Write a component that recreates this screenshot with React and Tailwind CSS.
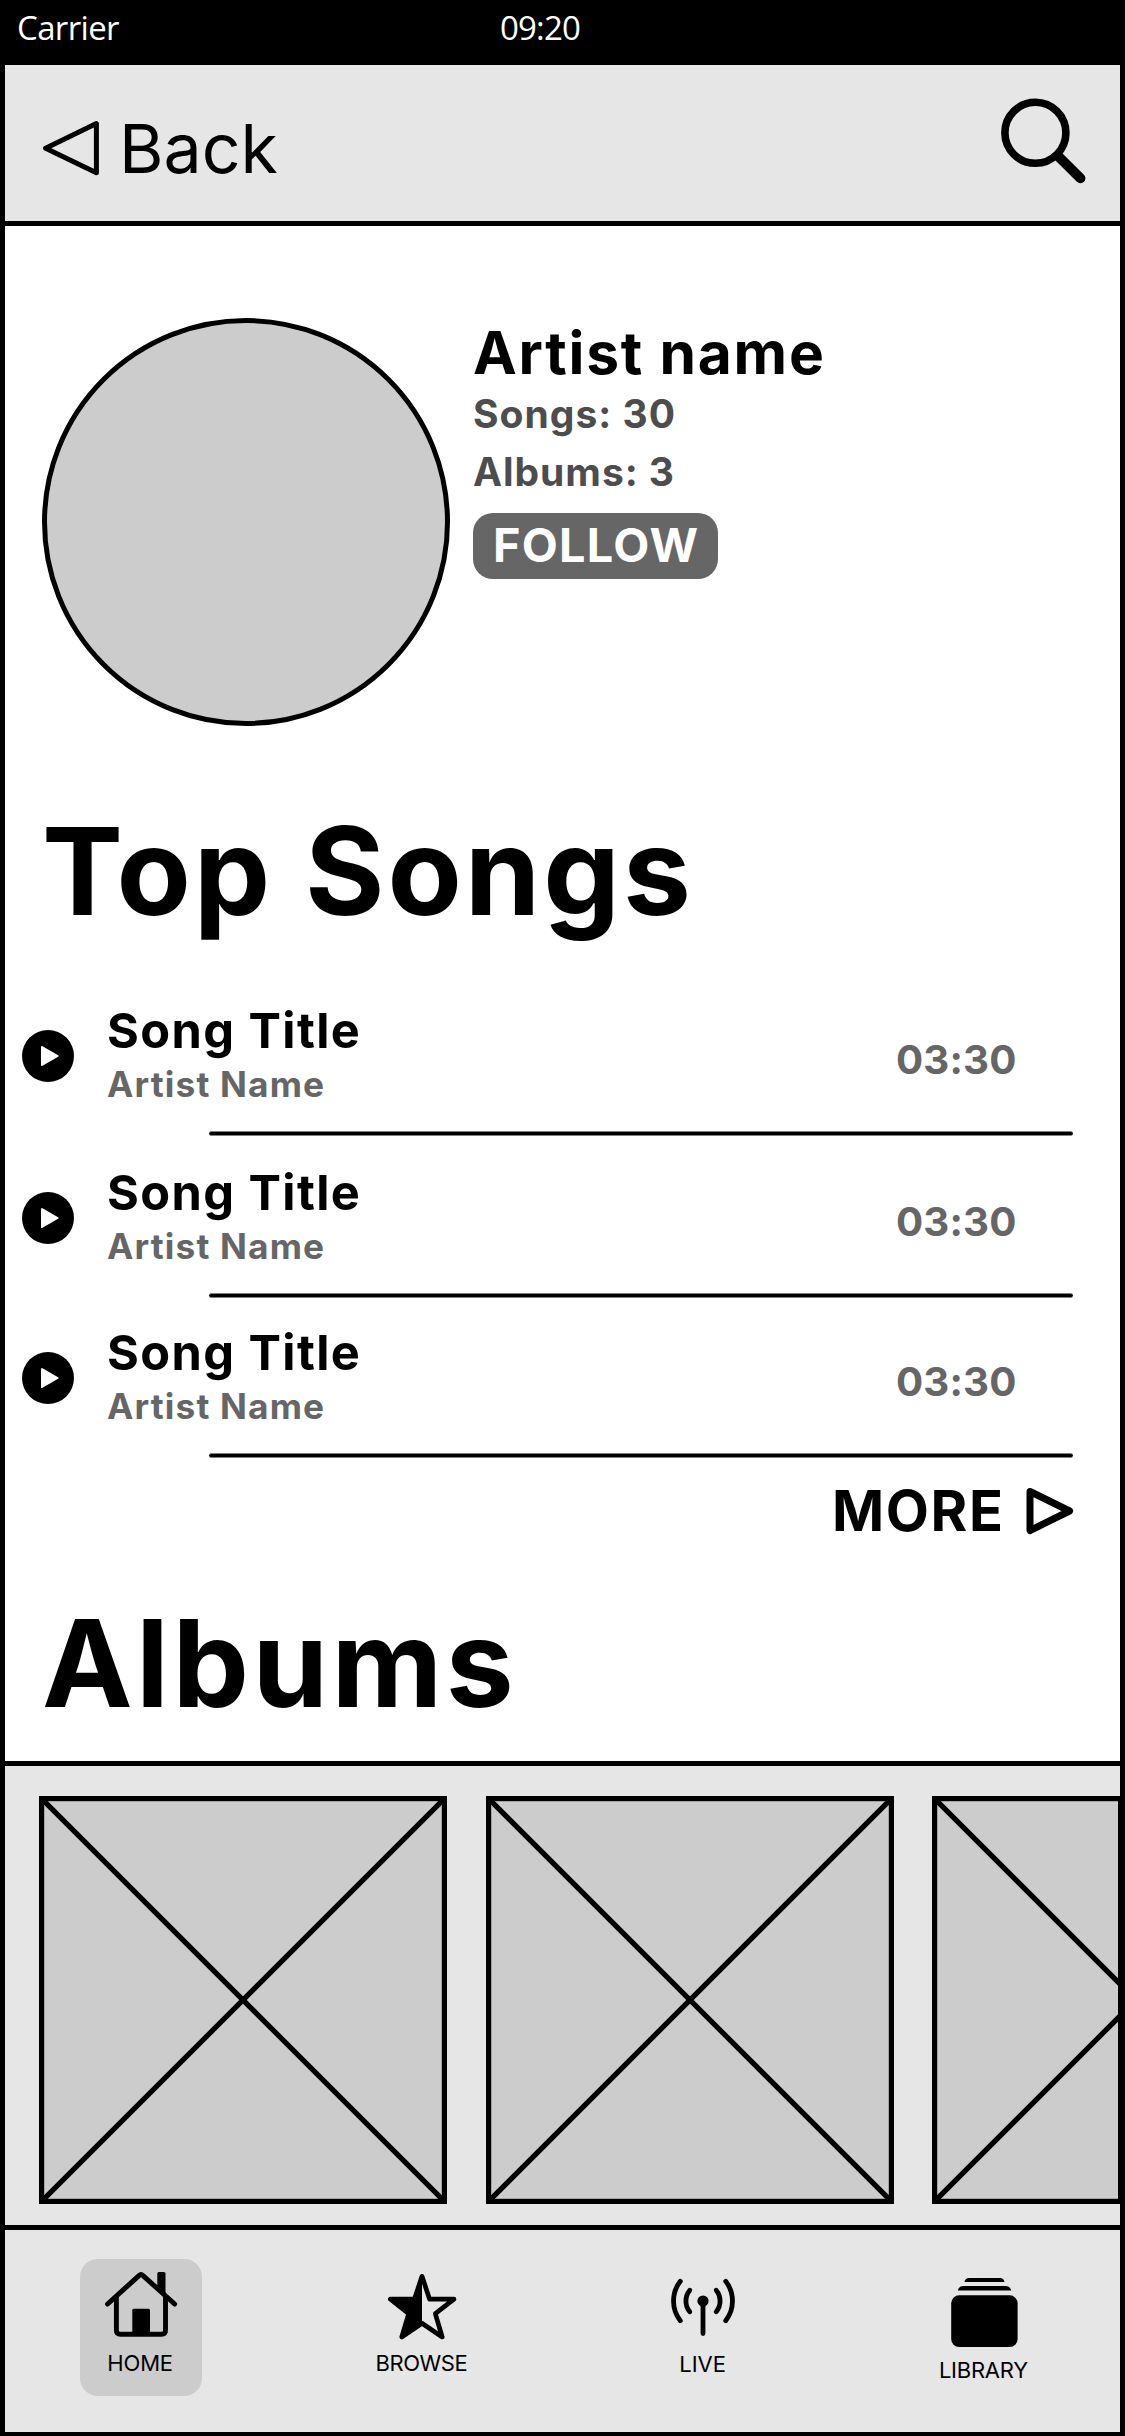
/* eslint-disable react/prop-types */
import clsx from "clsx";

const songs = [
  { id: 1, title: "Song Title", artist: "Artist Name", length: "03:30" },
  { id: 2, title: "Song Title", artist: "Artist Name", length: "03:30" },
  { id: 3, title: "Song Title", artist: "Artist Name", length: "03:30" },
];

/* Icons */
function BackIcon() {
  return (
    <svg width="58" height="56" viewBox="0 0 58 56" fill="none">
      <path
        d="M3.6 28.2 L54.4 3.6 V52.8 Z"
        stroke="#000"
        strokeWidth="5"
        strokeLinejoin="round"
      />
    </svg>
  );
}

function SearchIcon() {
  return (
    <svg width="87" height="87" viewBox="0 0 87 87" fill="none" stroke="#000">
      <circle cx="35.4" cy="34.8" r="30.5" strokeWidth="7.6" />
      <path d="M58.5 58.5 L80.4 80.2" strokeWidth="10" strokeLinecap="round" />
    </svg>
  );
}

function PlayIcon() {
  return (
    <svg width="52" height="52" viewBox="0 0 52 52">
      <circle cx="26" cy="26" r="26" />
      <path
        d="M20 17 L35.6 26 L20 35 Z"
        fill="#fff"
        stroke="#fff"
        strokeWidth="2"
        strokeLinejoin="round"
      />
    </svg>
  );
}

function MoreIcon() {
  return (
    <svg width="50" height="48" viewBox="0 0 50 48" fill="none">
      <path
        d="M6 4.5 L45.6 24 L6 43.5 Z"
        stroke="#000"
        strokeWidth="7"
        strokeLinejoin="round"
      />
    </svg>
  );
}

function HomeIcon() {
  return (
    <svg width="80" height="80" viewBox="0 0 80 80" fill="none" stroke="#000">
      <path
        d="M6.6 36 L38 7.6 Q40 5.8 42 7.6 L73.6 36"
        strokeWidth="5"
        strokeLinecap="round"
      />
      <path
        d="M15.4 29 V62.2 Q15.4 66.2 19.4 66.2 H60.5 Q64.5 66.2 64.5 62.2 V29"
        strokeWidth="4.9"
      />
      <path
        d="M56.3 22.5 V5.6 Q56.3 4.1 57.8 4.1 H63 Q64.5 4.1 64.5 5.6 V29 Z"
        fill="#000"
        stroke="none"
      />
      <rect x="31.3" y="40.7" width="17.7" height="26" rx="1.5" fill="#000" stroke="none" />
    </svg>
  );
}

function StarIcon() {
  return (
    <svg width="80" height="80" viewBox="0 0 80 80" fill="none">
      <path
        d="M40 8.3 L47.6 31.2 H72 L53.3 45.6 L60.2 69 L40 55.2 L19.8 69 L26.7 45.6 L8.3 31.2 H32.4 Z"
        stroke="#000"
        strokeWidth="4.7"
        strokeLinejoin="round"
      />
      <path d="M40 8.3 V55.2 L19.8 69 L26.7 45.6 L8.3 31.2 H32.4 Z" fill="#000" />
    </svg>
  );
}

function LiveIcon() {
  return (
    <svg
      width="80"
      height="80"
      viewBox="0 0 80 80"
      fill="none"
      stroke="#000"
      strokeWidth="4.8"
      strokeLinecap="round"
    >
      <path d="M17.3 13.3 A32 32 0 0 0 17.3 52.7" />
      <path d="M62.7 13.3 A32 32 0 0 1 62.7 52.7" />
      <path d="M26.8 22.2 A17 17 0 0 0 26.8 43.8" />
      <path d="M53.2 22.2 A17 17 0 0 1 53.2 43.8" />
      <path d="M40 33 V65.5" />
      <circle cx="40" cy="33" r="5.6" fill="#000" stroke="none" />
    </svg>
  );
}

function LibraryIcon() {
  return (
    <svg width="80" height="80" viewBox="0 0 80 80">
      <path d="M20.4 14 Q21.4 10 25 10 H56 Q59.6 10 60.6 14 Z" />
      <path d="M13.8 22.6 Q15 18 19 18 H62 Q66 18 67.2 22.6 Z" />
      <rect x="7.2" y="27.3" width="66.4" height="51.7" rx="8" />
    </svg>
  );
}

const tabs = [
  { name: "HOME", icon: HomeIcon, active: true, label: "mr-px tracking-[-0.18px]" },
  { name: "BROWSE", icon: StarIcon, label: "mr-px tracking-[-0.43px]" },
  { name: "LIVE", icon: LiveIcon, label: "mt-px mr-px" },
  { name: "LIBRARY", icon: LibraryIcon, label: "mt-[7px] mr-0.5 tracking-[-0.24px]" },
];

function SongRow({ song, className }) {
  return (
    <div className={clsx("pt-[26px]", className)}>
      <div className="flex items-start h-[108px] pl-[17px]">
        <button className="mt-[30px] shrink-0">
          <PlayIcon />
        </button>
        <div className="ml-[33px] mt-px w-[789px]">
          <p className="text-[48.7px] leading-[60px] font-bold tracking-[1.41px]">
            {song.title}
          </p>
          <p className="text-[35.3px] leading-[48px] font-bold tracking-[1.15px] text-[#666666]">
            {song.artist}
          </p>
        </div>
        <span className="mt-9 text-[40.3px] leading-[48px] font-bold tracking-[0.14px] text-[#666666]">
          {song.length}
        </span>
      </div>
      <div className="mt-[23px] ml-[204px] mr-[47px] h-[5px] rounded-sm bg-black border-y border-[#808080]" />
    </div>
  );
}

function AlbumCover() {
  return (
    <svg
      className="block shrink-0"
      width="408"
      height="408"
      viewBox="0 0 408 408"
      stroke="#000"
      strokeWidth="5.2"
    >
      <rect x="2.6" y="2.6" width="402.8" height="402.8" fill="#cccccc" />
      <path d="M2.6 2.6 L405.4 405.4 M405.4 2.6 L2.6 405.4" />
    </svg>
  );
}

function App() {
  return (
    <div className="w-[1125px] h-[2436px] flex flex-col overflow-hidden bg-white text-black border-x-[5px] border-b-4 border-black font-['Inter',sans-serif]">
      {/* Status bar */}
      <div className="flex h-[65px] shrink-0 bg-black pl-3 text-white text-[33px] leading-[55px] font-['Open_Sans',sans-serif]">
        <span className="w-[483px] tracking-[-0.66px]">Carrier</span>
        <span className="tracking-[-0.82px]">09:20</span>
      </div>

      {/* Header */}
      <header className="flex items-start justify-between h-[161px] shrink-0 bg-[#e6e6e6] border-b-[5px] border-black pl-[37px] pr-[33px]">
        <button className="mt-[51px] flex items-center">
          <BackIcon />
          <span className="ml-[19px] text-[68px] leading-[64px]">Back</span>
        </button>
        <button className="mt-[33px]">
          <SearchIcon />
        </button>
      </header>

      <main className="flex-1">
        {/* Artist */}
        <section className="flex pt-[92px] pl-[37px]">
          <div className="size-[408px] rounded-full bg-[#cccccc] border-[5px] border-black" />
          <div className="ml-[23px] pt-[3px] font-bold">
            <h1 className="text-[58.7px] leading-[64px] tracking-[1.72px]">Artist name</h1>
            <p className="text-[39px] leading-[58px] tracking-[1.02px] text-[#4d4d4d]">
              Songs: 30
            </p>
            <p className="text-[39px] leading-[58px] tracking-[0.95px] text-[#4d4d4d]">
              Albums: 3
            </p>
            <button className="mt-3 flex w-[245px] h-[66px] pl-5 rounded-[20px] bg-[#666666] text-white text-[46.8px] leading-[64px] tracking-[1.27px]">
              FOLLOW
            </button>
          </div>
        </section>

        {/* Top songs */}
        <section>
          <h2 className="mt-[85px] pl-[37px] text-[121.4px] leading-[120px] font-bold tracking-[2.93px]">
            Top Songs
          </h2>
          <div className="mt-[43px]">
            {songs.map((song, i) => (
              <SongRow key={song.id} song={song} className={i === 2 && "-mt-0.5"} />
            ))}
          </div>
          <button className="mt-[23px] ml-[827px] flex items-center">
            <span className="text-[56px] leading-[60px] font-bold tracking-[1.63px]">
              MORE
            </span>
            <span className="ml-[19px]">
              <MoreIcon />
            </span>
          </button>
        </section>

        {/* Albums */}
        <section>
          <h2 className="mt-[62px] pl-[37px] text-[121.4px] leading-[120px] font-bold tracking-[3.46px]">
            Albums
          </h2>
          <div className="mt-[38px] flex h-[464px] overflow-hidden bg-[#e6e6e6] border-t-[5px] border-black pt-[30px] pl-[34px]">
            <AlbumCover />
            <div className="ml-[39px]">
              <AlbumCover />
            </div>
            <div className="ml-[38px] h-[408px] w-[188px] shrink-0 overflow-hidden border-r-2 border-black">
              <AlbumCover />
            </div>
          </div>
        </section>
      </main>

      {/* Tab bar */}
      <nav className="h-[207px] shrink-0 bg-[#e6e6e6] border-t-[5px] border-black">
        <div className="-mx-[5px] grid grid-cols-4 justify-items-center pt-[29px]">
          {tabs.map(({ name, icon: Icon, active, label }) => (
            <button
              key={name}
              className={clsx(
                "flex flex-col items-center w-[122px] h-[137px] pt-[9px] rounded-[18px]",
                active && "bg-[#cccccc]"
              )}
            >
              <Icon />
              <span className={clsx("text-[22px] leading-[30px]", label)}>{name}</span>
            </button>
          ))}
        </div>
      </nav>
    </div>
  );
}

export default App;
